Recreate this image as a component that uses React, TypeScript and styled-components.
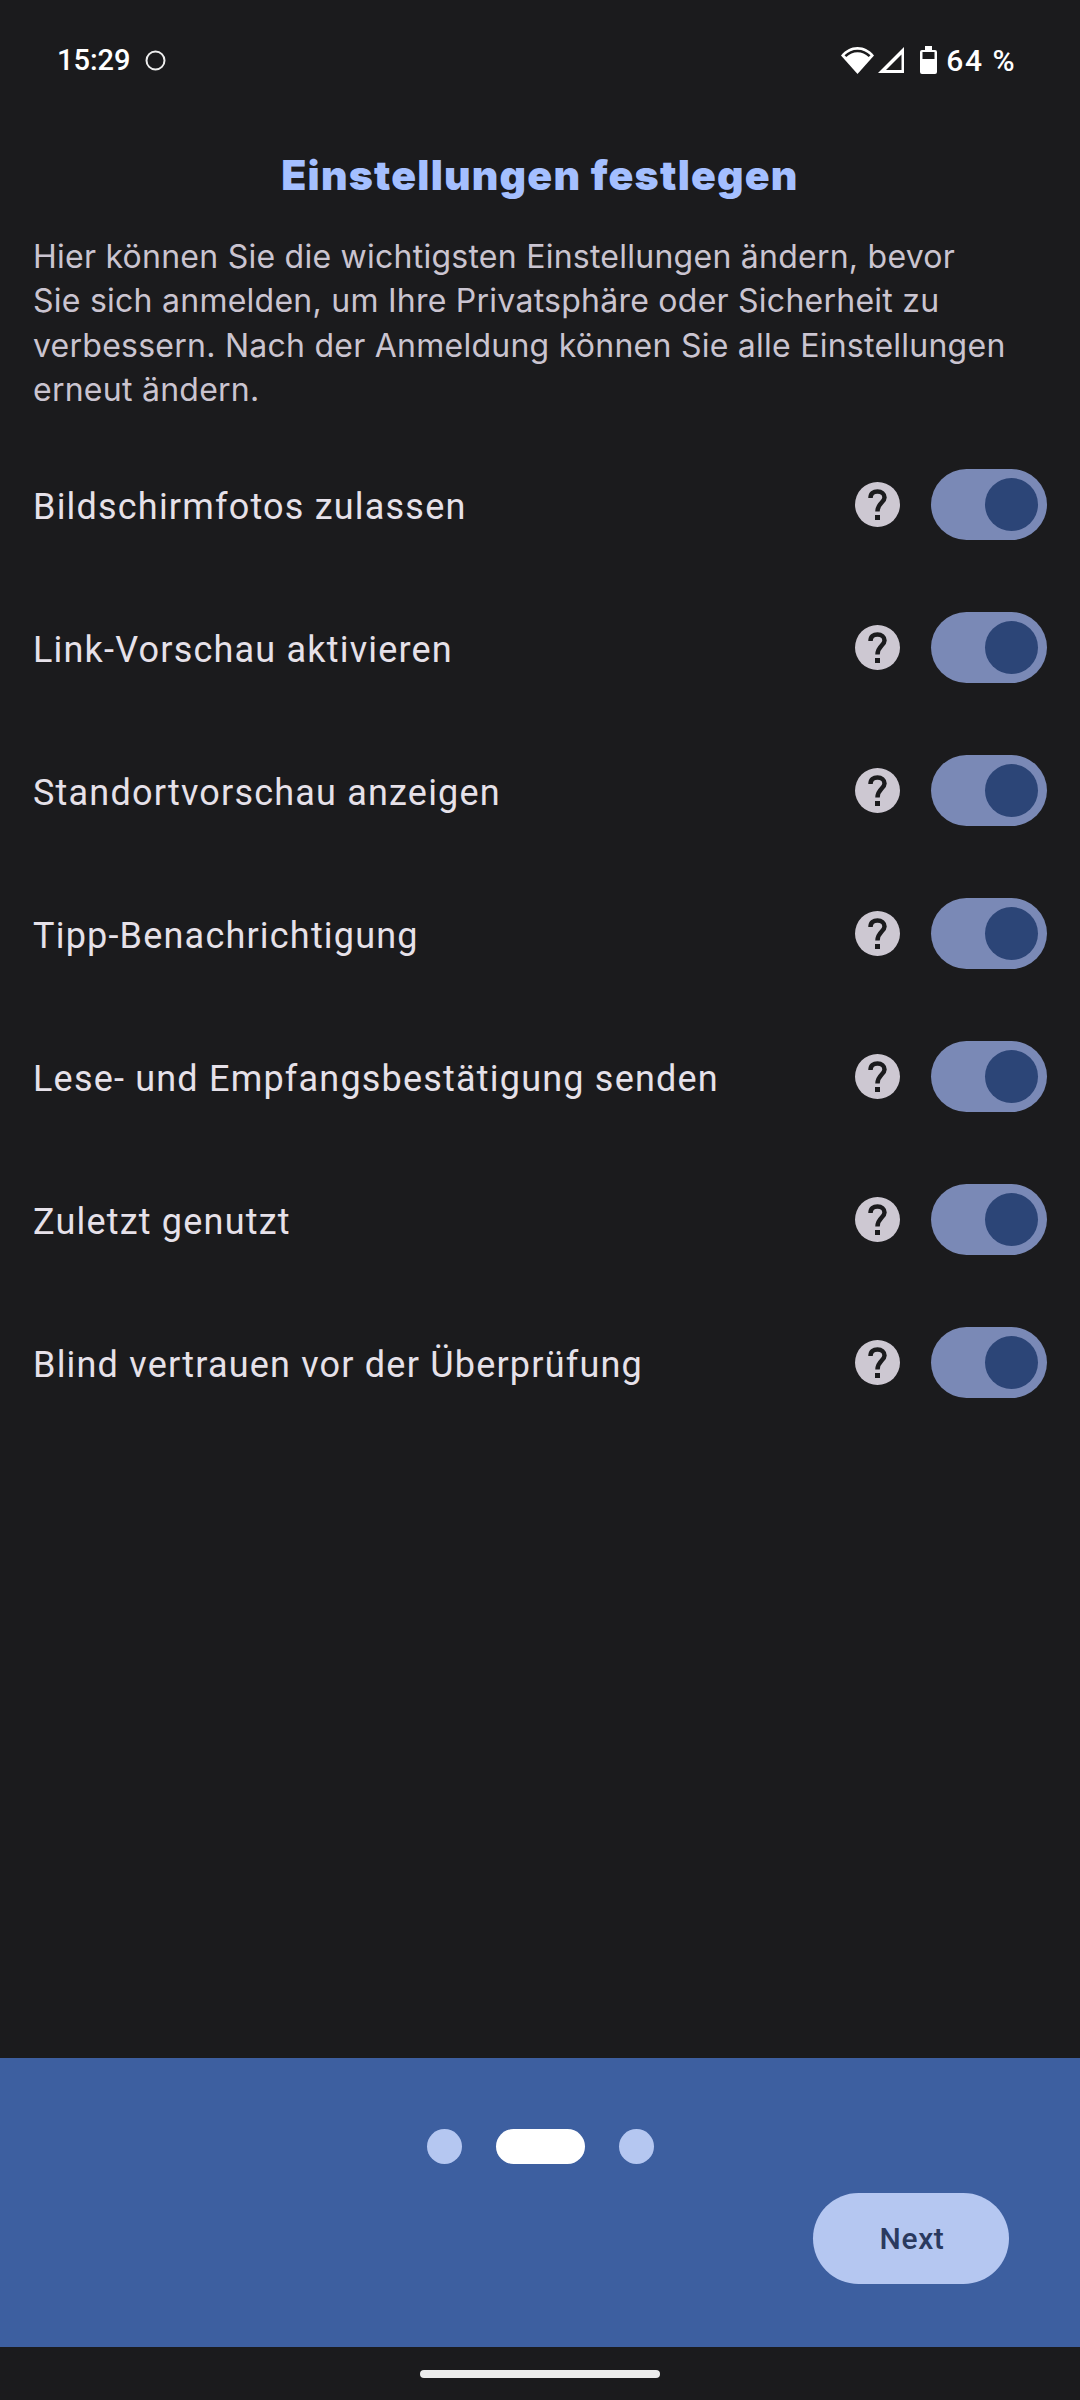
import React from "react";
import styled, { createGlobalStyle } from "styled-components";

const Global = createGlobalStyle`
  html, body { margin: 0; padding: 0; background: #1b1b1d; }
  * { box-sizing: border-box; }
`;
const Screen = styled.div`
  width: 1080px; height: 2400px; background: #1b1b1d; display: flex; flex-direction: column; overflow: hidden;
`;
const StatusBar = styled.div`
  height: 120px; flex: none; padding: 0 64px 0 57px; display: flex; align-items: center; justify-content: space-between;
  color: #fff; font-family: Roboto, sans-serif; font-weight: 500; font-size: 29px;
`;
const StatusGroup = styled.div`
  display: flex; align-items: center; gap: ${(p: { $gap: number }) => p.$gap}px;
`;
const Percent = styled.span`
  letter-spacing: 1.5px; font-size: 30px; margin-left: 5px;
`;
const Title = styled.h1`
  margin: 32px 0 0; text-align: center; color: #a4bfff; height: 46px; line-height: 46px;
  font-family: Inter, sans-serif; font-weight: 900; font-size: 41px; letter-spacing: 1.2px;
`;
const Intro = styled.p`
  margin: 37px 0 0; padding: 0 33px; color: #cac4d0; font-family: Inter, sans-serif; font-weight: 400;
  font-size: 32px; line-height: 44.3px; white-space: pre-line; letter-spacing: 0.25px;
`;
const List = styled.div`
  margin-top: 57px; display: flex; flex-direction: column; gap: 72px;
`;
const Row = styled.div`
  height: 71px; padding: 0 33px; display: flex; align-items: center;
`;
const Label = styled.span`
  flex: 1; padding-top: 4px; color: #e6e1e9; font-family: Roboto, sans-serif; font-size: 36px; letter-spacing: 1.2px;
`;
const Help = styled.svg`
  width: 45px; height: 45px; margin-right: 31px; flex: none;
`;
const Track = styled.div`
  width: 116px; height: 71px; border-radius: 36px; background: #7a89b6; padding: 9px; display: flex; justify-content: flex-end; flex: none;
`;
const Thumb = styled.div`
  width: 53px; height: 53px; border-radius: 50%; background: #2c4577;
`;
const Spacer = styled.div`
  flex: 1;
`;
const Footer = styled.div`
  height: 289px; flex: none; background: #3d5fa0; padding-top: 71px; display: flex; flex-direction: column;
`;
const Dots = styled.div`
  display: flex; justify-content: center; gap: 34px;
`;
const Dot = styled.div<{ $active?: boolean }>`
  height: 35px; width: ${(p) => (p.$active ? 89 : 35)}px; border-radius: 18px; background: ${(p) => (p.$active ? "#ffffff" : "#b5c7f1")};
`;
const NextRow = styled.div`
  display: flex; justify-content: flex-end; padding-right: 71px; margin-top: 29px;
`;
const NextButton = styled.button`
  width: 196px; height: 91px; border: 0; border-radius: 46px; background: #b5c7f1; color: #2a3a5f;
  font-family: Roboto, sans-serif; font-weight: 500; font-size: 30px; letter-spacing: 0.6px; padding: 0 0 0 2px;
`;
const NavArea = styled.div`
  height: 53px; flex: none; display: flex; justify-content: center; padding-top: 23px;
`;
const HomeBar = styled.div`
  width: 240px; height: 8px; border-radius: 4px; background: #ececec;
`;

const labels = [
  "Bildschirmfotos zulassen",
  "Link-Vorschau aktivieren",
  "Standortvorschau anzeigen",
  "Tipp-Benachrichtigung",
  "Lese- und Empfangsbestätigung senden",
  "Zuletzt genutzt",
  "Blind vertrauen vor der Überprüfung",
];

export default function App() {
  return (
    <Screen>
      <Global />
      <StatusBar>
        <StatusGroup $gap={14}>
          <span>15:29</span>
          <svg width="21" height="21" viewBox="0 0 21 21"><circle cx="10.5" cy="10.5" r="9" fill="none" stroke="#eee" strokeWidth="2" /></svg>
        </StatusGroup>
        <StatusGroup $gap={4}>
          <svg width="33" height="27" viewBox="0 0 33 27">
            <path d="M16.500 27 0 8.500C4.500 3 10 0 16.500 0S28.500 3 33 8.500Z" fill="#fff" />
            <path d="M3.500 8.300C7 4.700 11.500 2.700 16.500 2.700s9.500 2 13 5.600l-1.800 1.800C24.500 7 20.700 5.300 16.500 5.300S8.500 7 5.300 10.100Z" fill="#1b1b1d" />
          </svg>
          <svg width="26" height="26" viewBox="0 0 26 26">
            <path d="M0 26 26 0v26Z" fill="#fff" />
            <path d="M8 23 23.500 7.500V23Z" fill="#1b1b1d" />
          </svg>
          <svg width="17" height="28" viewBox="0 0 17 28" style={{ marginLeft: 12 }}>
            <path d="M5 0h7v4h3a2 2 0 0 1 2 2v20a2 2 0 0 1-2 2H2a2 2 0 0 1-2-2V6a2 2 0 0 1 2-2h3Z" fill="#fff" />
            <rect x="2.500" y="6" width="12" height="7" fill="#1b1b1d" />
          </svg>
          <Percent>64 %</Percent>
        </StatusGroup>
      </StatusBar>
      <Title>Einstellungen festlegen</Title>
      <Intro>{"Hier können Sie die wichtigsten Einstellungen ändern, bevor\nSie sich anmelden, um Ihre Privatsphäre oder Sicherheit zu\nverbessern. Nach der Anmeldung können Sie alle Einstellungen\nerneut ändern."}</Intro>
      <List>
        {labels.map((l) => (
          <Row key={l}>
            <Label>{l}</Label>
            <Help viewBox="0 0 45 45">
              <circle cx="22.500" cy="22.500" r="22.500" fill="#cdc8d2" />
              <path d="M15.500 16C15.500 11.500 18.500 9.500 22.500 9.500C26.500 9.500 29.500 12 29.500 15.500C29.500 20.500 22.500 21 22.500 29.500" fill="none" stroke="#1b1b1d" strokeWidth="4.500" />
              <rect x="20" y="33" width="5" height="5" fill="#1b1b1d" />
            </Help>
            <Track><Thumb /></Track>
          </Row>
        ))}
      </List>
      <Spacer />
      <Footer>
        <Dots><Dot /><Dot $active /><Dot /></Dots>
        <NextRow><NextButton>Next</NextButton></NextRow>
      </Footer>
      <NavArea><HomeBar /></NavArea>
    </Screen>
  );
}
